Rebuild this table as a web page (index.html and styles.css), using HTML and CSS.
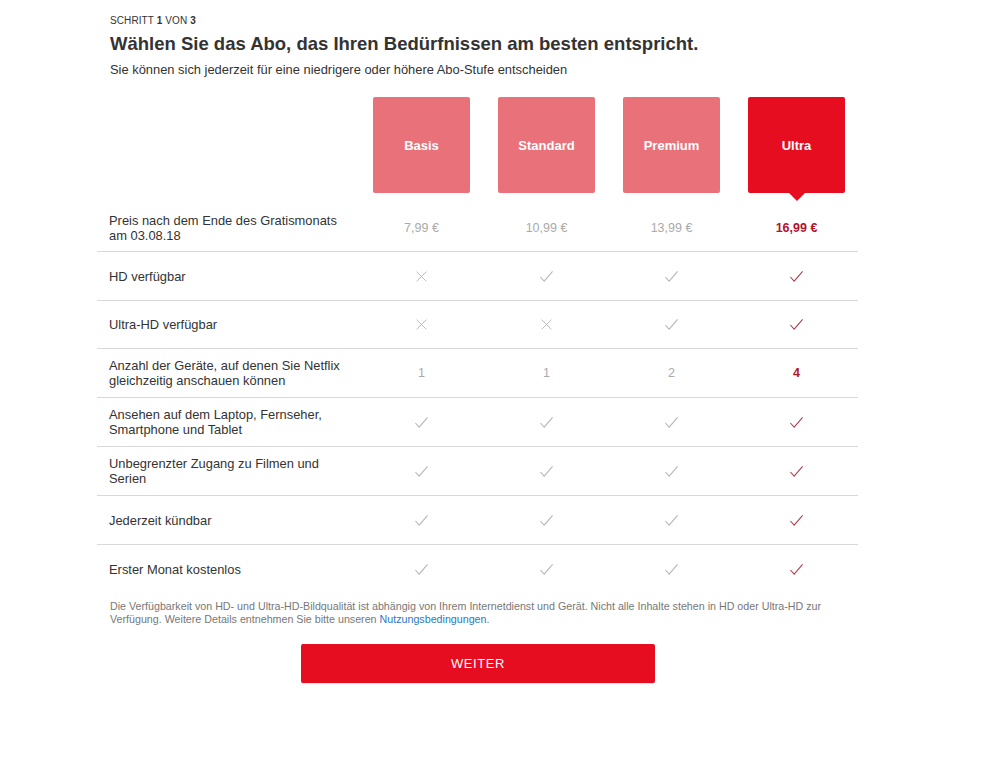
FILE: index.html
```html
<!DOCTYPE html>
<html lang="de">
<head>
<meta charset="utf-8">
<title>Abo wählen</title>
<link rel="stylesheet" href="styles.css">
</head>
<body>
<svg width="0" height="0" class="defs">
  <defs>
    <symbol id="chk" viewBox="0 0 16 16"><path d="M1.5 8.5 L5.5 13 L14.5 2.5" fill="none" stroke="currentColor" stroke-width="1.1"/></symbol>
    <symbol id="x" viewBox="0 0 16 16"><path d="M2 2 L14 14 M14 2 L2 14" fill="none" stroke="currentColor" stroke-width="1.1"/></symbol>
  </defs>
</svg>
<div class="page">
  <header class="head">
    <div class="step">SCHRITT <b>1</b> VON <b>3</b></div>
    <h1 class="title">Wählen Sie das Abo, das Ihren Bedürfnissen am besten entspricht.</h1>
    <p class="sub">Sie können sich jederzeit für eine niedrigere oder höhere Abo-Stufe entscheiden</p>
  </header>

  <div class="plans">
    <div class="spacer"></div>
    <div class="plan"><div class="card">Basis</div></div>
    <div class="plan"><div class="card">Standard</div></div>
    <div class="plan"><div class="card">Premium</div></div>
    <div class="plan"><div class="card sel">Ultra</div></div>
  </div>

  <div class="table">
    <div class="row price">
      <div class="label">Preis nach dem Ende des Gratismonats<br>am 03.08.18</div>
      <div class="cell">7,99 €</div>
      <div class="cell">10,99 €</div>
      <div class="cell">13,99 €</div>
      <div class="cell on strong">16,99 €</div>
    </div>
    <div class="row">
      <div class="label">HD verfügbar</div>
      <div class="cell"><svg class="ic xi"><use href="#x"/></svg></div>
      <div class="cell"><svg class="ic"><use href="#chk"/></svg></div>
      <div class="cell"><svg class="ic"><use href="#chk"/></svg></div>
      <div class="cell on"><svg class="ic"><use href="#chk"/></svg></div>
    </div>
    <div class="row short">
      <div class="label">Ultra-HD verfügbar</div>
      <div class="cell"><svg class="ic xi"><use href="#x"/></svg></div>
      <div class="cell"><svg class="ic xi"><use href="#x"/></svg></div>
      <div class="cell"><svg class="ic"><use href="#chk"/></svg></div>
      <div class="cell on"><svg class="ic"><use href="#chk"/></svg></div>
    </div>
    <div class="row">
      <div class="label">Anzahl der Geräte, auf denen Sie Netflix<br>gleichzeitig anschauen können</div>
      <div class="cell">1</div>
      <div class="cell">1</div>
      <div class="cell">2</div>
      <div class="cell on strong">4</div>
    </div>
    <div class="row">
      <div class="label">Ansehen auf dem Laptop, Fernseher,<br>Smartphone und Tablet</div>
      <div class="cell"><svg class="ic"><use href="#chk"/></svg></div>
      <div class="cell"><svg class="ic"><use href="#chk"/></svg></div>
      <div class="cell"><svg class="ic"><use href="#chk"/></svg></div>
      <div class="cell on"><svg class="ic"><use href="#chk"/></svg></div>
    </div>
    <div class="row">
      <div class="label">Unbegrenzter Zugang zu Filmen und<br>Serien</div>
      <div class="cell"><svg class="ic"><use href="#chk"/></svg></div>
      <div class="cell"><svg class="ic"><use href="#chk"/></svg></div>
      <div class="cell"><svg class="ic"><use href="#chk"/></svg></div>
      <div class="cell on"><svg class="ic"><use href="#chk"/></svg></div>
    </div>
    <div class="row">
      <div class="label">Jederzeit kündbar</div>
      <div class="cell"><svg class="ic"><use href="#chk"/></svg></div>
      <div class="cell"><svg class="ic"><use href="#chk"/></svg></div>
      <div class="cell"><svg class="ic"><use href="#chk"/></svg></div>
      <div class="cell on"><svg class="ic"><use href="#chk"/></svg></div>
    </div>
    <div class="row last">
      <div class="label">Erster Monat kostenlos</div>
      <div class="cell"><svg class="ic"><use href="#chk"/></svg></div>
      <div class="cell"><svg class="ic"><use href="#chk"/></svg></div>
      <div class="cell"><svg class="ic"><use href="#chk"/></svg></div>
      <div class="cell on"><svg class="ic"><use href="#chk"/></svg></div>
    </div>
  </div>

  <p class="note">Die Verfügbarkeit von HD- und Ultra-HD-Bildqualität ist abhängig von Ihrem Internetdienst und Gerät. Nicht alle Inhalte stehen in HD oder Ultra-HD zur Verfügung. Weitere Details entnehmen Sie bitte unseren <a href="#">Nutzungsbedingungen</a>.</p>

  <div class="actions">
    <button class="btn">WEITER</button>
  </div>
</div>
</body>
</html>
```

FILE: styles.css
```css
* { box-sizing: border-box; }
html, body { margin: 0; padding: 0; background: #fff; }
body {
  font-family: "Liberation Sans", Arial, sans-serif;
  color: #333;
  width: 1000px;
  height: 764px;
  overflow: hidden;
}
.defs { position: absolute; }
.page {
  width: 761px;
  margin-left: 97px;
  padding-top: 15px;
}
.head { padding-left: 13px; }
.step {
  font-size: 10px;
  line-height: 12px;
  color: #333;
  letter-spacing: 0.1px;
}
.step b { font-weight: bold; }
.title {
  margin: 6px 0 0;
  font-size: 18.5px;
  line-height: 22px;
  font-weight: bold;
  color: #333;
}
.sub {
  margin: 7px 0 0;
  font-size: 12.9px;
  line-height: 16px;
  color: #333;
}
.plans {
  display: grid;
  grid-template-columns: 262px repeat(4, 125px);
  margin-top: 19px;
}
.plan { display: flex; justify-content: center; }
.card {
  position: relative;
  width: 97px;
  height: 96px;
  background: #e9727a;
  color: #fff;
  font-weight: bold;
  font-size: 13px;
  display: flex;
  align-items: center;
  justify-content: center;
  border-radius: 2px;
}
.card.sel { background: #e50d1f; }
.card.sel::after {
  content: "";
  position: absolute;
  left: 50%;
  bottom: -8px;
  margin-left: -8px;
  border-left: 8px solid transparent;
  border-right: 8px solid transparent;
  border-top: 8px solid #e50d1f;
}
.table { margin-top: 12px; }
.row {
  display: grid;
  grid-template-columns: 262px repeat(4, 125px);
  height: 49px;
  align-items: center;
  border-bottom: 1px solid #d9d9d9;
}
.row.price { height: 47px; }
.row.short { height: 48px; }
.row.last { border-bottom: none; }
.label {
  padding-left: 12px;
  font-size: 12.9px;
  line-height: 15px;
  color: #333;
}
.cell {
  text-align: center;
  font-size: 12.5px;
  color: #aaa;
  display: flex;
  justify-content: center;
  align-items: center;
}
.cell.on { color: #b2132c; }
.cell.strong { font-weight: bold; }
.ic {
  width: 15px;
  height: 15px;
  color: #b5b5b5;
}
.ic.xi { width: 13px; height: 13px; }
.cell.on .ic { color: #b23a4a; }
.note {
  margin: 6px 0 0;
  padding-left: 13px;
  font-size: 10.7px;
  line-height: 13px;
  color: #777;
}
.note a { color: #2a78c2; text-decoration: none; }
.actions {
  padding-left: 204px;
  margin-top: 18px;
}
.btn {
  width: 354px;
  height: 39px;
  border: none;
  border-radius: 2px;
  background: #e50d1f;
  color: #fff;
  font-family: "Liberation Sans", Arial, sans-serif;
  font-size: 13px;
  letter-spacing: 0.6px;
  box-shadow: 0 1px 0 rgba(0,0,0,0.1);
}
```
